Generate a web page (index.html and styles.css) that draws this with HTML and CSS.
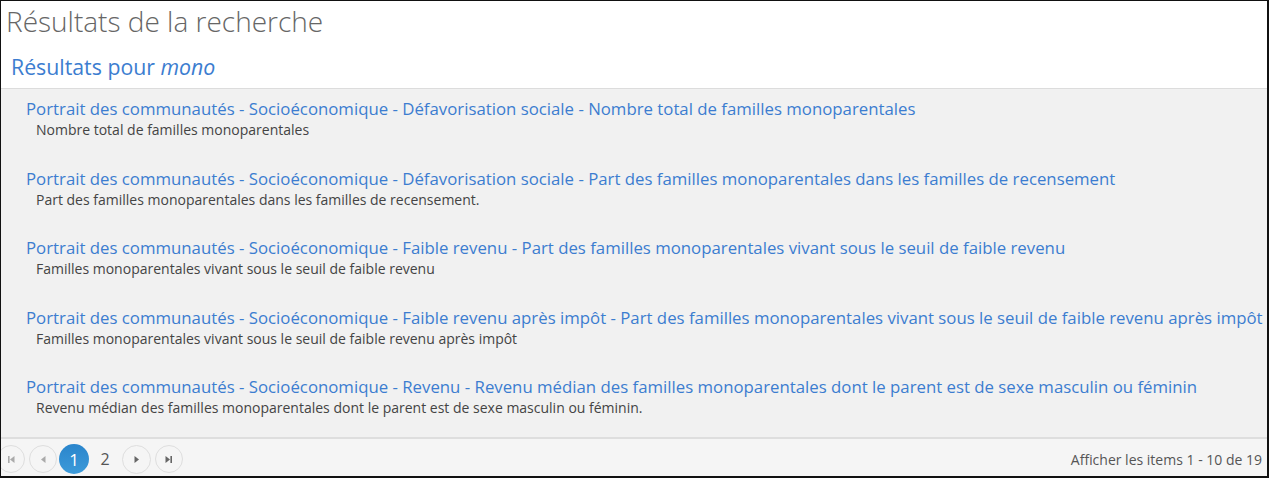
FILE: index.html
```html
<!DOCTYPE html>
<html lang="fr">
<head>
  <meta charset="UTF-8" />
  <title>Résultats de la recherche</title>
  <link rel="stylesheet" href="styles.css">
</head>
<body>
  <div class="frame">
    <h1 class="page-title">Résultats de la recherche</h1>
    <h2 class="query">Résultats pour <em>mono</em></h2>

    <div class="results">
      <div class="item">
        <a href="#" class="item-link">Portrait des communautés - Socioéconomique - Défavorisation sociale - Nombre total de familles monoparentales</a>
        <div class="item-desc">Nombre total de familles monoparentales</div>
      </div>
      <div class="item">
        <a href="#" class="item-link">Portrait des communautés - Socioéconomique - Défavorisation sociale - Part des familles monoparentales dans les familles de recensement</a>
        <div class="item-desc">Part des familles monoparentales dans les familles de recensement.</div>
      </div>
      <div class="item">
        <a href="#" class="item-link">Portrait des communautés - Socioéconomique - Faible revenu - Part des familles monoparentales vivant sous le seuil de faible revenu</a>
        <div class="item-desc">Familles monoparentales vivant sous le seuil de faible revenu</div>
      </div>
      <div class="item">
        <a href="#" class="item-link">Portrait des communautés - Socioéconomique - Faible revenu après impôt - Part des familles monoparentales vivant sous le seuil de faible revenu après impôt</a>
        <div class="item-desc">Familles monoparentales vivant sous le seuil de faible revenu après impôt</div>
      </div>
      <div class="item">
        <a href="#" class="item-link">Portrait des communautés - Socioéconomique - Revenu - Revenu médian des familles monoparentales dont le parent est de sexe masculin ou féminin</a>
        <div class="item-desc">Revenu médian des familles monoparentales dont le parent est de sexe masculin ou féminin.</div>
      </div>
    </div>

    <div class="pager">
      <div class="pager-nav">
        <a href="#" class="pg-btn pg-first" title="Première page">
          <svg width="8" height="9" viewBox="0 0 8 9"><rect x="1" y="1" width="1.6" height="7" fill="#aaa"/><path d="M7.5 1 L3 4.5 L7.5 8 Z" fill="#aaa"/></svg>
        </a>
        <a href="#" class="pg-btn pg-prev" title="Page précédente">
          <svg width="8" height="9" viewBox="0 0 8 9"><path d="M6.5 1 L2 4.5 L6.5 8 Z" fill="#aaa"/></svg>
        </a>
        <span class="pg-num active">1</span>
        <a href="#" class="pg-num">2</a>
        <a href="#" class="pg-btn pg-next" title="Page suivante">
          <svg width="8" height="9" viewBox="0 0 8 9"><path d="M1.5 1 L6 4.5 L1.5 8 Z" fill="#666"/></svg>
        </a>
        <a href="#" class="pg-btn pg-last" title="Dernière page">
          <svg width="8" height="9" viewBox="0 0 8 9"><path d="M0.5 1 L5 4.5 L0.5 8 Z" fill="#666"/><rect x="5.4" y="1" width="1.6" height="7" fill="#666"/></svg>
        </a>
      </div>
      <span class="pager-info">Afficher les items 1 - 10 de 19</span>
    </div>
  </div>
</body>
</html>
```

FILE: styles.css
```css
* {
  box-sizing: border-box;
}
body {
  margin: 0;
  font-family: 'Open Sans', 'Noto Sans', sans-serif;
  color: #333;
  background: #fff;
}
.frame {
  width: 1269px;
  height: 478px;
  border-style: solid;
  border-color: #111;
  border-width: 1px 2px 2px 1px;
  display: flex;
  flex-direction: column;
  overflow: hidden;
}
.page-title {
  flex-shrink: 0;
  margin: 0;
  padding: 2px 0 0 5px;
  font-size: 28px;
  font-weight: 300;
  line-height: 36px;
  color: #666;
}
.query {
  flex-shrink: 0;
  margin: 0;
  padding: 14px 0 0 10px;
  height: 50px;
  border-bottom: 1px solid #dcdcdc;
  font-size: 21.3px;
  font-weight: 400;
  line-height: 28px;
  color: #3c7dd0;
}
.query em {
  font-style: italic;
}
.results {
  flex: 1;
  min-height: 0;
  overflow: hidden;
  background: #f1f1f1;
  padding: 9px 0 0 25px;
  border-bottom: 2px solid #dedede;
  display: flex;
  flex-direction: column;
  gap: 28.5px;
}
.item-link {
  display: block;
  font-size: 16.8px;
  line-height: 22px;
  color: #3c7dd0;
  text-decoration: none;
  white-space: nowrap;
}
.item-desc {
  padding-left: 10px;
  font-size: 14px;
  line-height: 19px;
  color: #444;
}
.pager {
  height: 37px;
  flex-shrink: 0;
  background: #f5f5f5;
  display: flex;
  align-items: center;
  justify-content: space-between;
  padding: 3px 5px 0 0;
}
.pager-nav {
  display: flex;
  align-items: center;
  margin-left: -4px;
}
.pg-btn,
.pg-num {
  width: 28px;
  height: 28px;
  border-radius: 50%;
  display: flex;
  align-items: center;
  justify-content: center;
  text-decoration: none;
  font-size: 16px;
  color: #555;
}
.pg-btn {
  border: 1px solid #dedede;
  background: #f5f5f5;
}
.pg-prev {
  margin-left: 4px;
}
.pg-num {
  width: 30px;
  height: 30px;
  margin-left: 1px;
}
.pg-num.active {
  margin-left: 2px;
  color: #fff;
  font-size: 17px;
  background: linear-gradient(#2a85cc, #3c9ad9);
}
.pg-next {
  width: 29px;
  height: 29px;
  margin-left: 2px;
}
.pg-last {
  margin-left: 4px;
}
.pager-info {
  font-size: 14px;
  color: #555;
}
```
